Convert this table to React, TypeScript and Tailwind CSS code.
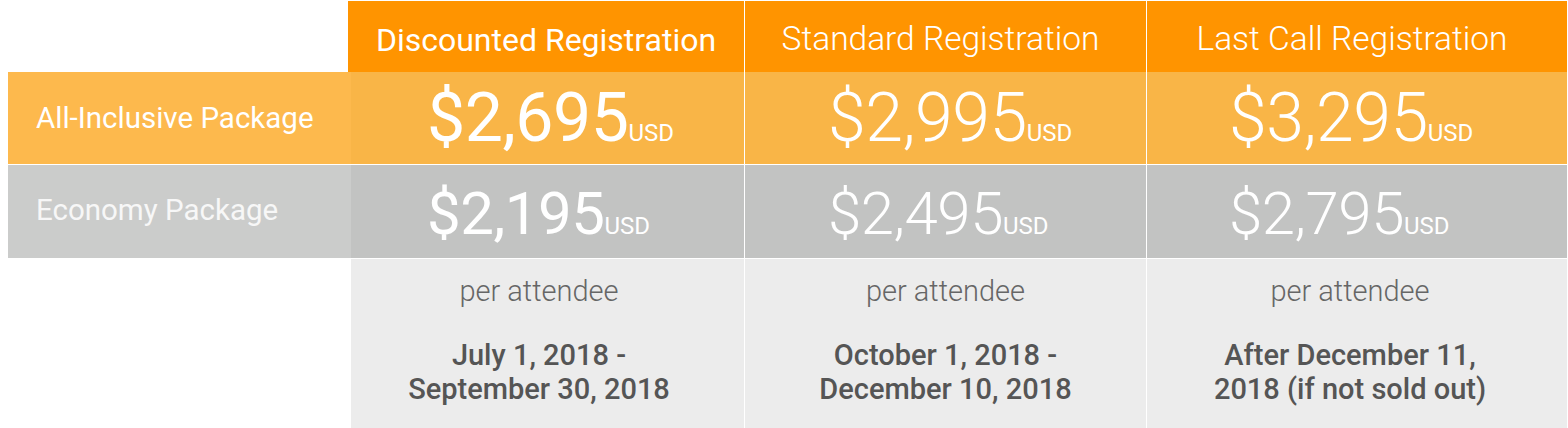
const columns = [
  {
    title: 'Discounted Registration',
    allInclusive: '$2,695',
    economy: '$2,195',
    dates: ['July 1, 2018 -', 'September 30, 2018'],
    featured: true,
  },
  {
    title: 'Standard Registration',
    allInclusive: '$2,995',
    economy: '$2,495',
    dates: ['October 1, 2018 -', 'December 10, 2018'],
    featured: false,
  },
  {
    title: 'Last Call Registration',
    allInclusive: '$3,295',
    economy: '$2,795',
    dates: ['After December 11,', '2018 (if not sold out)'],
    featured: false,
  },
];

const widths = ['w-[393px]', 'w-[402px]', 'w-[421px]'];
const pricePad = ['pl-[76px]', 'pl-[83px]', 'pl-[82px]'];
const footPad = ['pr-[17px]', 'pr-0', 'pr-[14px]'];

const Price = ({ value, big, featured }: { value: string; big: boolean; featured: boolean }) => (
  <div className={`flex items-baseline text-white ${featured ? 'font-normal' : 'font-light'}`}>
    <span className={`${big ? 'text-[68px]' : 'text-[60px]'} leading-none tracking-[-0.5px]`}>{value}</span>
    <span className="text-[24px] leading-none font-normal">USD</span>
  </div>
);

export default function App() {
  return (
    <div className="w-[1568px] h-[428px] bg-white pl-[8px] font-['Roboto',sans-serif] overflow-hidden">
      {/* header */}
      <div className="flex pt-px h-[72px]">
        <div className="w-[343px]" />
        {columns.map((col, i) => (
          <div
            key={col.title}
            className={`${widths[i]} ${i === 0 ? 'ml-[-3px] w-[396px]' : 'border-l border-white pr-[10px]'} flex items-center justify-center bg-[#ff9400] pt-[6px] text-white ${col.featured ? 'text-[32px] font-normal' : 'text-[33.5px] font-light'}`}
          >
            {col.title}
          </div>
        ))}
      </div>

      {/* all-inclusive */}
      <div className="flex h-[92px]">
        <div className="w-[343px] flex items-center bg-[#fdb94d] pl-[28px] text-[29.5px] text-white">
          All-Inclusive Package
        </div>
        {columns.map((col, i) => (
          <div
            key={col.title}
            className={`${widths[i]} ${pricePad[i]} ${i === 0 ? '' : 'border-l border-white'} flex items-center bg-[#f9b547]`}
          >
            <Price value={col.allInclusive} big featured={col.featured} />
          </div>
        ))}
      </div>

      {/* economy */}
      <div className="flex h-[94px] border-t border-white">
        <div className="w-[343px] flex items-center bg-[#cbcccb] pl-[28px] pb-[2px] text-[29.5px] text-[#f7f7f7]">
          Economy Package
        </div>
        {columns.map((col, i) => (
          <div
            key={col.title}
            className={`${widths[i]} ${pricePad[i]} ${i === 0 ? '' : 'border-l border-white'} flex items-center bg-[#c2c3c2] pt-[4px]`}
          >
            <Price value={col.economy} big={false} featured={col.featured} />
          </div>
        ))}
      </div>

      {/* footer */}
      <div className="flex h-[170px] border-t border-white">
        <div className="w-[343px]" />
        {columns.map((col, i) => (
          <div
            key={col.title}
            className={`${widths[i]} ${footPad[i]} ${i === 0 ? '' : 'border-l border-white'} flex flex-col items-center bg-[#ececec] pt-[15px] text-center`}
          >
            <div className="text-[29px] font-light leading-[34px] text-[#666666]">per attendee</div>
            <div className="mt-[30px] text-[29px] font-medium leading-[34px] text-[#555555]">
              {col.dates.map((line) => (
                <div key={line}>{line}</div>
              ))}
            </div>
          </div>
        ))}
      </div>
    </div>
  );
}
